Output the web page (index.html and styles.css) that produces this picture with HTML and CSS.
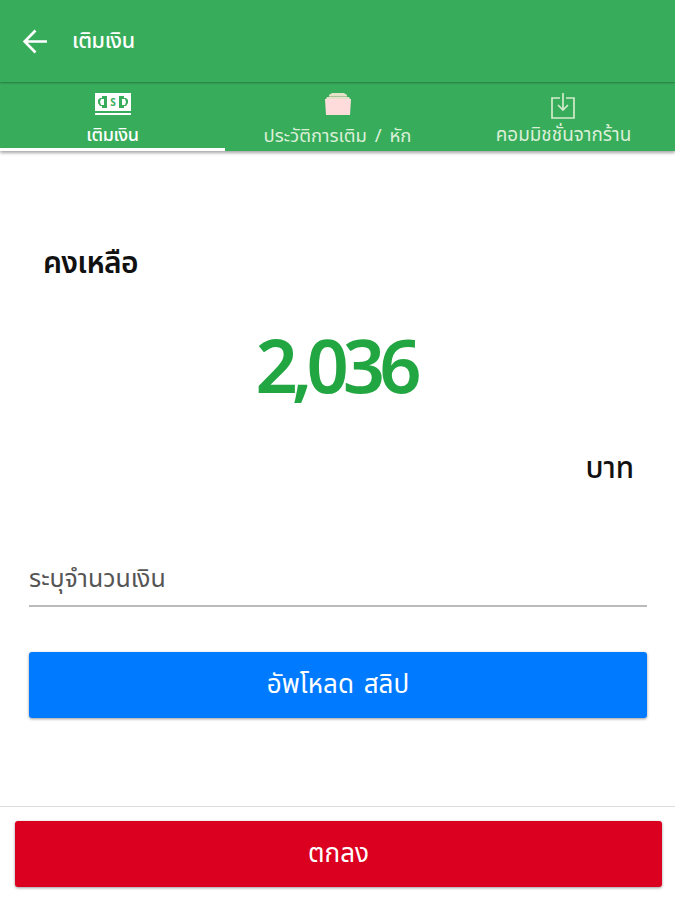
FILE: index.html
```html
<!DOCTYPE html>
<html lang="th">
<head>
    <meta charset="UTF-8">
    <meta name="viewport" content="width=device-width, initial-scale=1.0">
    <title>เติมเงิน</title>
    <link rel="stylesheet" href="styles.css">
</head>
<body>
    <header class="toolbar">
        <svg class="back" viewBox="0 0 24 24"><path d="M23 12H2M12 1.500L1.500 12 12 22.500"/></svg>
        <h1 class="title">เติมเงิน</h1>
    </header>
    <nav class="tabs">
        <a class="tab active">
            <svg class="icon-money" width="36" height="23" viewBox="0 0 36 23">
                <path class="note" d="M0 0h36v18H0zM0 20h36v2H0z"/>
                <path class="mark" d="M12 3v12H7v-2H5l-2-3V7l2-2h2V3zM24 3v12h5v-2h2l2-3V7l-2-2h-2V3z"/>
                <path class="note" d="M6 6h3v6H6L5 9zM30 6h-3v6h3l1-3z"/>
                <text x="18" y="13" class="dollar">S</text>
            </svg>
            <span class="label">เติมเงิน</span>
        </a>
        <a class="tab">
            <svg class="icon-history" width="28" height="23" viewBox="0 0 28 23">
                <path class="sheets" d="M8 0h12l3 2v2h2l1 2H2l1-2h2V2z"/>
                <path class="lines" d="M5 3.500h18"/>
                <path class="folder" d="M1 6h26l-1 16H2z"/>
            </svg>
            <span class="label label-history">ประวัติการเติม / หัก</span>
        </a>
        <a class="tab">
            <svg class="icon-download" width="24" height="26" viewBox="0 0 24 26"><path d="M9 5H1v20h22V5h-8M12 0v17M7 12l5 5 5-5"/></svg>
            <span class="label label-commission">คอมมิชชั่นจากร้าน</span>
        </a>
    </nav>
    <main class="content">
        <div class="balance-label">คงเหลือ</div>
        <div class="amount">2,036</div>
        <div class="unit">บาท</div>
        <div class="field">ระบุจำนวนเงิน</div>
        <button class="btn btn-upload">อัพโหลด สลิป</button>
    </main>
    <footer class="footer">
        <button class="btn btn-submit">ตกลง</button>
    </footer>
</body>
</html>
```
FILE: styles.css
```css
* {
    box-sizing: border-box;
}
body {
    margin: 0;
    height: 900px;
    display: flex;
    flex-direction: column;
    font-family: "Noto Sans Thai", "Noto Sans", "Liberation Sans", sans-serif;
    color: #111;
    background-color: #fff;
}
.toolbar {
    position: relative;
    height: 82px;
    display: flex;
    align-items: center;
    padding-left: 23px;
    background-color: #37ad5b;
    color: #fff;
    box-shadow: 0 1px 2px rgba(0,0,0,0.3);
}
.back {
    width: 25px;
    height: 25px;
    fill: none;
    stroke: #fff;
    stroke-width: 2.6;
}
.title {
    margin: 0 0 0 24px;
    font-size: 21.5px;
    font-weight: 500;
    letter-spacing: -0.3px;
}
.tabs {
    height: 69px;
    display: flex;
    background-color: #37ad5b;
    box-shadow: 0 2px 3px rgba(0,0,0,0.35);
}
.tab {
    flex: 1;
    display: flex;
    flex-direction: column;
    align-items: center;
    padding-top: 11px;
    color: #dcefd8;
    border-bottom: 3px solid transparent;
}
.tab.active {
    color: #fff;
    border-color: #fff;
}
.tab svg {
    flex: none;
}
.note {
    fill: #fff;
}
.mark {
    fill: #37ad5b;
}
.dollar {
    font-size: 10px;
    font-weight: bold;
    text-anchor: middle;
    fill: #37ad5b;
}
.sheets {
    fill: #e5e0c8;
}
.lines {
    fill: none;
    stroke: #a9c49c;
}
.folder {
    fill: #ffdcdc;
}
.icon-download {
    fill: none;
    stroke: #d3ebcb;
    stroke-width: 1.7;
}
.label {
    margin-top: 4px;
    font-size: 18px;
    line-height: 32px;
    white-space: nowrap;
}
.active .label {
    font-weight: 500;
    letter-spacing: -0.3px;
}
.label-history {
    font-size: 18.5px;
    word-spacing: 3px;
}
.label-commission {
    margin-top: 1px;
    padding-left: 2px;
    font-size: 18.9px;
}
.content {
    flex: 1;
    display: flex;
    flex-direction: column;
    padding: 0 28px 0 29px;
}
.balance-label {
    height: 50px;
    margin-top: 88px;
    padding-left: 14px;
    font-size: 30px;
    line-height: 50px;
    font-weight: 600;
    letter-spacing: -0.7px;
}
.amount {
    height: 90px;
    margin-top: 34px;
    padding-right: 5px;
    font-family: "Noto Sans", sans-serif;
    font-size: 74px;
    line-height: 84px;
    font-weight: 600;
    letter-spacing: -6px;
    text-align: center;
    color: #22a641;
}
.unit {
    height: 50px;
    margin-top: 31px;
    padding-right: 13px;
    font-size: 29.5px;
    line-height: 50px;
    font-weight: 500;
    text-align: right;
}
.field {
    height: 57px;
    margin-top: 56px;
    font-size: 24.9px;
    line-height: 59px;
    color: #555;
    border-bottom: 2px solid #bbb;
}
.btn {
    height: 66px;
    padding: 0;
    border: 0;
    border-radius: 3px;
    color: #fff;
    font-family: inherit;
    font-size: 26px;
    box-shadow: 0 1px 3px rgba(0,0,0,0.4);
}
.btn-upload {
    margin-top: 45px;
    background-color: #007bff;
    word-spacing: 3px;
}
.btn-submit {
    width: 100%;
    background-color: #dc0020;
}
.footer {
    height: 94px;
    padding: 14px 13px 0 15px;
    border-top: 1px solid #ddd;
}
```
